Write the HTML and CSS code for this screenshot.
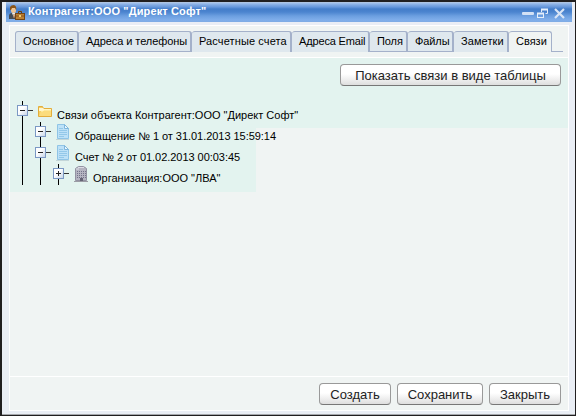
FILE: index.html
```html
<!DOCTYPE html>
<html lang="ru">
<head>
<meta charset="utf-8">
<title>Контрагент</title>
<link rel="stylesheet" href="styles.css">
</head>
<body>
<div class="window">
  <header class="titlebar">
    <svg class="app-icon" width="16" height="16" viewBox="0 0 16 16">
      <path d="M0 14V11Q0 8 3 8H7Q9 8 9 10V14Z" fill="#434b55"/>
      <path d="M3 8h4l-2 5z" fill="#e9edf2"/><path d="M4.500 9h1v4h-1z" fill="#b46a32"/>
      <rect x="2" y="2" width="5" height="6" rx="2" fill="#edc497"/>
      <path d="M1 5V2Q2 0 5 0Q8 1 7 5L6 3H3L2 5Z" fill="#8a5419"/>
      <path d="M9.500 8V6.500h3V8" fill="none" stroke="#6b3d0c"/>
      <rect x="6.500" y="8.500" width="9" height="6" fill="#bd8133" stroke="#744616"/>
      <path d="M7 11h8" stroke="#8a551c"/><path d="M10 10h2v2h-2z" fill="#f0cf74"/>
    </svg>
    <h1 class="caption">Контрагент:ООО "Директ Софт"</h1>
    <svg class="controls" width="46" height="12" viewBox="0 0 46 12">
      <rect x="0" y="5" width="12" height="3" rx="1" fill="#d3e1f5"/>
      <g fill="none" stroke="#e6effa">
        <path d="M19.500 5V2.500h6v4h-2"/><path d="M19 2.500h7" stroke-width="2"/>
        <rect x="15.500" y="6.500" width="6" height="4"/><path d="M15 6.500h7" stroke-width="2"/>
      </g>
      <path d="M33 2l9 9M42 2l-9 9" stroke="#d9e5f6" stroke-width="2.200"/>
    </svg>
  </header>
  <main class="panel">
    <nav class="tabs">
      <a class="tab t1 lined">Основное</a>
      <a class="tab t2 lined">Адреса и телефоны</a>
      <a class="tab t3">Расчетные счета</a>
      <a class="tab t4">Адреса Email</a>
      <a class="tab t5 lined">Поля</a>
      <a class="tab t6 lined">Файлы</a>
      <a class="tab t7">Заметки</a>
      <a class="tab t8 active">Связи</a>
      <span class="tail"></span>
    </nav>
    <section class="content">
      <div class="toolbar"><button class="btn wide">Показать связи в виде таблицы</button></div>
      <div class="tree">
        <div class="row">
          <span class="cell"><i class="toggle"></i></span>
          <svg class="icon" width="18" height="21" viewBox="0 0 18 21">
            <path d="M3.500 15.500v-10h4l1 2h8v8z" fill="#f6cf62" stroke="#e3ad3c"/>
            <path d="M4 7h4l1 1h7v2H4z" fill="#fff6cf"/>
            <path d="M4 15l2-5h2l1-1h7v6z" fill="#fbdc7c"/><path d="M6 10h2l1-1h7" stroke="#fff4b8" fill="none"/>
          </svg>
          <span class="label">Связи объекта Контрагент:ООО "Директ Софт"</span>
        </div>
        <div class="row">
          <span class="cell"></span><span class="cell"><i class="toggle"></i></span>
          <svg class="icon" width="18" height="21" viewBox="0 0 18 21">
            <path d="M3 17.500h13" stroke="#c4d6d8"/>
            <path d="M4.500 2.500h7l4 4v10h-11z" fill="#bde1f7" stroke="#8fc4e6"/><path d="M11.500 2.500v4h4z" fill="#eaf7ff" stroke="#7fb7dd"/>
            <path d="M6 6.500h4M6 8.500h8M6 10.500h8M6 12.500h8M6 14.500h5" stroke="#93c8e9"/>
          </svg>
          <span class="label">Обращение № 1 от 31.01.2013 15:59:14</span>
        </div>
        <div class="row">
          <span class="cell"></span><span class="cell"><i class="toggle"></i></span>
          <svg class="icon" width="18" height="21" viewBox="0 0 18 21">
            <path d="M3 17.500h13" stroke="#c4d6d8"/>
            <path d="M4.500 2.500h7l4 4v10h-11z" fill="#bde1f7" stroke="#8fc4e6"/><path d="M11.500 2.500v4h4z" fill="#eaf7ff" stroke="#7fb7dd"/>
            <path d="M6 6.500h4M6 8.500h8M6 10.500h8M6 12.500h8M6 14.500h5" stroke="#93c8e9"/>
          </svg>
          <span class="label">Счет № 2 от 01.02.2013 00:03:45</span>
        </div>
        <div class="row">
          <span class="cell"></span><span class="cell"></span><span class="cell"><i class="toggle plus"></i></span>
          <svg class="icon" width="18" height="21" viewBox="0 0 18 21">
            <path d="M3 17.500h14" stroke="#9b9ca5"/>
            <path d="M4.500 16.500v-12l3-2h5l3 2v12z" fill="#b5b4c1" stroke="#9392a2"/>
            <path d="M7 3.500h6M5 5h3" stroke="#dddde5"/>
            <path d="M6 7.500h9M6 9.500h9M6 11.500h9M6 13.500h9" stroke="#74738a" stroke-dasharray="1 1"/>
            <path d="M9 14h3v3H9z" fill="#656475"/>
          </svg>
          <span class="label">Организация:ООО "ЛВА"</span>
        </div>
      </div>
    </section>
    <footer class="footer">
      <button class="btn b1">Создать</button>
      <button class="btn b2">Сохранить</button>
      <button class="btn b3">Закрыть</button>
    </footer>
  </main>
</div>
</body>
</html>
```
FILE: styles.css
```css
* { box-sizing: border-box; }
body { margin: 0; font: 11px "Liberation Sans", Arial, sans-serif; color: #000; }
.window {
  width: 576px; height: 416px; padding: 0 3px 2px 4px;
  border: solid #211f20; border-width: 2px 1px 1px 2px;
  background: #eaeef5; box-shadow: inset 0 -1px #a5a7ab;
}
.titlebar {
  display: flex; height: 20px; padding: 2px 4px 0 3px;
  background: linear-gradient(#bac7d9 0, #a3c1eb 1px, #80a9e2 3px, #6797db 5px, #447dc9 7px, #4b84cf 10px, #6c9fe0 14px, #80aeea 18px, #7fabe4 20px);
}
.app-icon { margin-top: 1px; }
.caption { margin: 0 auto 0 3px; font-size: 11px; letter-spacing: 0.13px; line-height: 14px; color: #fff; white-space: nowrap; }
.controls { margin-top: 3px; }
.panel {
  display: flex; flex-direction: column; width: 560px; height: 386px; margin: 3px 0 0 3px;
  border: 1px solid #fff; background: #f0f4f3;
}
.tabs { display: flex; height: 31px; padding: 5px 0 0 5px; }
.tab {
  height: 21px; padding-left: 7px; line-height: 19px; white-space: nowrap; color: #000;
  border: solid #a4b1ca; border-width: 1px 2px 0 0; border-radius: 3px 3px 0 0; background: #dfe8ee;
}
.lined { border-bottom-width: 1px; border-bottom-right-radius: 0; }
.t1 { width: 64px; border-left-width: 1px; letter-spacing: 0.1px; }
.t2 { width: 113px; letter-spacing: -0.06px; }
.t3 { width: 100px; letter-spacing: 0.12px; }
.t4 { width: 78px; letter-spacing: -0.15px; }
.t5 { width: 38px; letter-spacing: -0.1px; }
.t6 { width: 46px; letter-spacing: -0.1px; }
.t7 { width: 55px; letter-spacing: 0.1px; }
.t8 { width: 43px; border-right-width: 1px; }
.active { background: #f0f4f3; }
.tail { width: 11px; height: 21px; border-bottom: 1px solid #a4b1ca; }
.content { height: 319px; border-top: 1px solid #fff; }
.toolbar { display: flex; justify-content: flex-end; height: 70px; padding: 6px 7px 0 0; background: #e3f3ef; }
.tree { width: 246px; height: 91px; margin-top: -27px; padding-left: 7px; background: #e3f3ef; }
.row { display: flex; height: 21px; }
.cell { flex: none; width: 18px; height: 21px; padding-top: 4px; background: linear-gradient(#000, #000) 5px 0 / 1px 100% no-repeat; }
.cell:has(.toggle) { background: linear-gradient(#000, #000) 5px 0 / 1px 100% no-repeat, linear-gradient(#333, #333) 11px 9px / 5px 1px no-repeat; }
.toggle {
  display: block; width: 11px; height: 11px; border: 1px solid #7b98c4;
  background: linear-gradient(#222, #222) 2px 4px / 5px 1px no-repeat, linear-gradient(135deg, #fff 40%, #c8d5e8);
}
.plus { background: linear-gradient(#222, #222) 2px 4px / 5px 1px no-repeat, linear-gradient(#222, #222) 4px 2px / 1px 5px no-repeat, linear-gradient(135deg, #fff 40%, #c8d5e8); }
.icon { flex: none; }
.label { margin-left: 4px; padding-top: 8px; line-height: 13px; white-space: nowrap; }
.row:nth-child(2) .label, .row:nth-child(3) .label { letter-spacing: -0.04px; }
.footer { display: flex; justify-content: flex-end; gap: 6px; flex: 1; padding: 6px 7px 0 0; border-top: 1px solid #fff; }
.btn {
  height: 22px; margin: 0; padding: 0; border: 1px solid #999; border-bottom-color: #777; border-radius: 4px;
  background: linear-gradient(#fff 45%, #dedede); color: #222;
  font: 13px "Liberation Sans", Arial, sans-serif; white-space: nowrap;
}
.wide { width: 221px; }
.b1 { width: 72px; }
.b2 { width: 86px; }
.b3 { width: 72px; }
```
